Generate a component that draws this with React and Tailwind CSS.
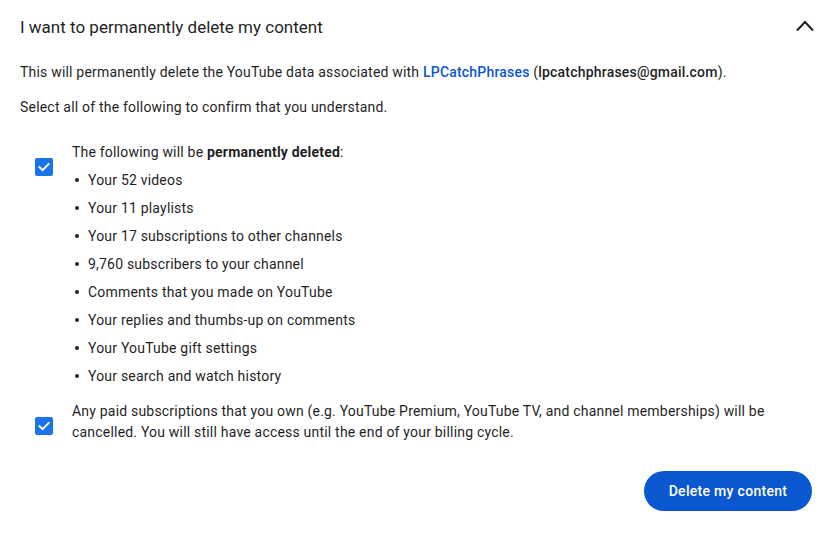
import React from "react";

const items = [
  "Your 52 videos",
  "Your 11 playlists",
  "Your 17 subscriptions to other channels",
  "9,760 subscribers to your channel",
  "Comments that you made on YouTube",
  "Your replies and thumbs-up on comments",
  "Your YouTube gift settings",
  "Your search and watch history",
];

function Check() {
  return (
    <div className="mt-4 ml-[35px] w-[18px] h-[18px] shrink-0 rounded-[2px] bg-[#1a73e8] flex items-center justify-center">
      <svg width="14" height="14" viewBox="0 0 14 14" fill="none">
        <path d="M2.5 7.2 L5.6 10.2 L11.6 4" stroke="white" strokeWidth="1.9" strokeLinecap="square" />
      </svg>
    </div>
  );
}

export default function App() {
  return (
    <div className="w-[835px] h-[537px] bg-white text-[#1f1f1f] font-['Roboto',sans-serif] text-[14px] leading-[20px] tracking-[0.2px]">
      <div className="h-[52px] flex items-center justify-between pl-5 pr-[21px]">
        <div className="text-[17px] leading-[24px] tracking-normal pt-[1px]">I want to permanently delete my content</div>
        <svg width="18" height="12" viewBox="0 0 18 12" fill="none">
          <path d="M1 10.5 L9 2 L17 10.5" stroke="#1f1f1f" strokeWidth="2" />
        </svg>
      </div>
      <p className="mt-[10px] px-5">
        This will permanently delete the YouTube data associated with{" "}
        <span className="font-medium text-[#0b57d0]">LPCatchPhrases</span> (
        <span className="font-medium">lpcatchphrases@gmail.com</span>).
      </p>
      <p className="mt-[15px] px-5">Select all of the following to confirm that you understand.</p>

      <div className="mt-[25px] flex">
        <Check />
        <div className="ml-[19px]">
          <div>
            The following will be <span className="font-bold">permanently deleted</span>:
          </div>
          <ul className="mt-2 flex flex-col gap-2">
            {items.map((t) => (
              <li key={t} className="flex items-center">
                <span className="ml-[3px] mr-[9px] w-[4px] h-[4px] rounded-full bg-[#1f1f1f]" />
                <span>{t}</span>
              </li>
            ))}
          </ul>
        </div>
      </div>

      <div className="mt-[15px] flex">
        <Check />
        <div className="ml-[19px] pr-5 leading-[21px]">
          Any paid subscriptions that you own (e.g. YouTube Premium, YouTube TV, and channel memberships) will be
          <br />
          cancelled. You will still have access until the end of your billing cycle.
        </div>
      </div>

      <div className="mt-[28px] flex justify-end pr-[23px]">
        <button className="h-10 w-[168px] rounded-full bg-[#0b57d0] text-white font-medium text-[14px] tracking-[0.3px]">
          Delete my content
        </button>
      </div>
    </div>
  );
}
